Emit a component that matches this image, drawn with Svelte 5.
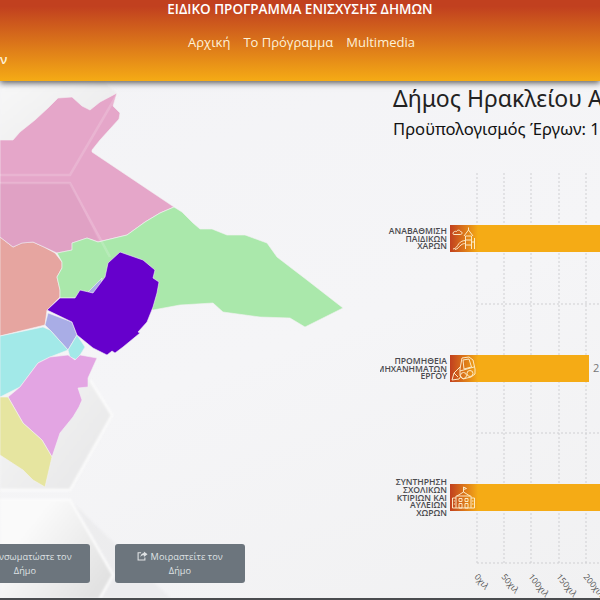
<script>
  const nav = ["Αρχική", "Το Πρόγραμμα", "Multimedia"];

  const regions = [
    { fill: "#e6a5a0", d: "M0 237L13 247L22 243L33 242L44 247L55 253L62 262L62 268L57 277L60 290L60 297L47 310L45 325L0 336Z" },
    { fill: "#e5a6c9", d: "M0 140L13 140L20 132L35 120L48 108L58 98L72 97L82 106L90 110L100 102L117 93L113 106L120 113L119 119L100 140L92 150L92 152L174 207L160 213L145 222L127 235L98 242L87 238L72 243L72 250L57 253L44 247L33 242L22 243L13 247L0 237Z" },
    { fill: "#aae8ab", d: "M174 207L182 212L193 223L200 229L212 229L227 235L245 235L267 243L277 257L290 267L307 280L343 308L305 327L290 318L260 317L223 312L213 303L180 305L153 310L130 300L95 300L75 298L60 298L60 290L57 277L62 268L62 262L57 253L72 250L72 243L87 238L98 242L127 235L145 222L160 213Z" },
    { fill: "#a9ade6", d: "M48 313L72 322L77 335L68 350L50 330L45 325Z" },
    { fill: "#a9ade6", d: "M88 292L102 278L100 295Z" },
    { fill: "#a2e9e8", d: "M0 336L43 327L50 330L68 350L50 357L38 363L20 387L0 397Z" },
    { fill: "#a2e9e8", d: "M77 335L85 347L77 360L70 357L68 350Z" },
    { fill: "#e3a5e3", d: "M68 355L75 360L80 355L97 358L88 378L88 387L78 388L82 400L79 407L73 417L60 433L52 457L42 440L23 423L8 397L20 387L38 363L50 357Z" },
    { fill: "#e6e5a0", d: "M0 397L8 397L23 423L42 440L52 457L45 487L33 480L23 470L0 455Z" },
    { fill: "#6600cc", d: "M47 310L60 298L75 298L80 290L93 293L105 277L108 263L120 252L143 260L155 270L153 278L159 282L157 293L153 307L147 322L138 332L140 333L123 347L115 353L112 351L107 355L93 348L77 335L72 322Z" }
  ];

  const hexLines = [
    "M105 81L118 93L70 175L0 175",
    "M0 183L70 183L110 257"
  ];

  const gridX = [97, 124, 151, 179, 206];
  const gridY = [13, 144, 273, 403];
  const ticks = ["0χιλ", "50χιλ", "100χιλ", "150χιλ", "200χιλ"];

  const bars = [
    { y: 65, w: 150, lines: ["ΑΝΑΒΑΘΜΙΣΗ", "ΠΑΙΔΙΚΩΝ", "ΧΑΡΩΝ"], kind: "play" },
    { y: 195, w: 139, lines: ["ΠΡΟΜΗΘΕΙΑ", "ΜΗΧΑΝΗΜΑΤΩΝ", "ΕΡΓΟΥ"], kind: "loader", value: "2" },
    { y: 324, w: 150, lines: ["ΣΥΝΤΗΡΗΣΗ", "ΣΧΟΛΙΚΩΝ", "ΚΤΙΡΙΩΝ ΚΑΙ", "ΑΥΛΕΙΩΝ", "ΧΩΡΩΝ"], kind: "school" }
  ];
</script>

<div class="page">
  <svg class="backdrop" width="600" height="600" viewBox="0 0 600 600" aria-hidden="true">
    <defs>
      <linearGradient id="hexshade" x1="0" y1="0" x2="1" y2="1">
        <stop offset="0" stop-color="#f8f8f8" />
        <stop offset="1" stop-color="#e6e6e7" />
      </linearGradient>
      <linearGradient id="hexshade2" x1="0" y1="0" x2="1" y2="0.7">
        <stop offset="0.3" stop-color="#fafafa" />
        <stop offset="1" stop-color="#e2e2e2" />
      </linearGradient>
    </defs>
    <path d="M0 88L85 84L105 81L118 93L70 175L0 175Z" fill="url(#hexshade)" />
    <path d="M40 340L90 380L112 415L70 490L0 490L0 400Z" fill="url(#hexshade)" />
    <path d="M0 500L70 500L113 575L100 598L0 598Z" fill="url(#hexshade2)" />
    <path d="M70 500L113 575L100 598L170 598Z" fill="#e8e8e9" opacity="0.6" />
    <path d="M90 380L112 415L70 490L0 490M0 500L70 500L113 575L100 598" fill="none" stroke="#fbfbfb" stroke-width="2.5" />
  </svg>

  <header class="top">
    <h1>ΕΙΔΙΚΟ ΠΡΟΓΡΑΜΜΑ ΕΝΙΣΧΥΣΗΣ ΔΗΜΩΝ</h1>
    <nav>
      {#each nav as item}
        <span>{item}</span>
      {/each}
    </nav>
    <span class="brand">ν</span>
  </header>

  <main>
    <section class="left">
      <svg class="map" width="380" height="600" viewBox="0 0 380 600" aria-label="Χάρτης">
        {#each regions as r}
          <path d={r.d} fill={r.fill} stroke="#f4f1f4" stroke-width="0.6" stroke-linejoin="round" />
        {/each}
        <path d="M0 183L70 183L98 240L87 238L72 243L72 250L57 253L33 242L13 247L0 237Z" fill="#b06a98" opacity="0.09" />
        {#each hexLines as d}
          <path {d} fill="none" stroke="#fff" stroke-opacity="0.16" stroke-width="2.5" />
        {/each}
      </svg>

      <div class="actions">
        <button>
          <svg class="btn-icon" viewBox="0 0 14 10" width="13" height="10"><path d="M4 1L1 5L4 9M10 1L13 5L10 9M8 1L6 9" fill="none" stroke="currentColor" stroke-width="1.3" /></svg>
          Ενσωματώστε τον Δήμο
        </button>
        <button>
          <svg class="btn-icon" viewBox="0 0 12 10" width="11" height="10"><path d="M4.5 1.5H1.2V9.3H8.6V6.5" fill="none" stroke="currentColor" stroke-width="1.2" /><path d="M7.5 0L11.5 3L7.5 6V4.3C5.8 4.3 4.4 4.8 3.6 6.6C3.8 4 5.4 2 7.5 1.8Z" fill="currentColor" /></svg>
          Μοιραστείτε τον Δήμο
        </button>
      </div>
    </section>

    <section class="right">
      <h2>Δήμος Ηρακλείου Αττικής</h2>
      <h3>Προϋπολογισμός Έργων: 1.250.000 €</h3>

      <svg class="chart" width="220" height="440" viewBox="0 0 220 440">
        <defs>
          <linearGradient id="iconfade" x1="0" y1="0" x2="1" y2="0">
            <stop offset="0" stop-color="#c1401f" />
            <stop offset="1" stop-color="#f5ab15" />
          </linearGradient>
        </defs>

        {#each gridX as x}
          <line x1={x} x2={x} y1="13" y2="403" class="grid" />
        {/each}
        {#each gridY.slice(1) as y}
          <line x1="97" x2="220" y1={y} y2={y} class="grid" />
        {/each}

        {#each bars as b}
          <rect x="70" y={b.y} width={b.w} height="27" fill="#f5ab15" />
          <rect x="70" y={b.y} width="28" height="27" fill="url(#iconfade)" />
          {#each b.lines as line, i}
            <text class="cat" x="67" y={b.y + 13.5 + (i - (b.lines.length - 1) / 2) * 7.6 + 3}>{line}</text>
          {/each}
          {#if b.value}
            <text class="val" x={b.w + 74} y={b.y + 17}>{b.value}</text>
          {/if}

          <g transform="translate(70 {b.y})" class="ico">
            {#if b.kind === "play"}
              <path d="M3 8.5C3 6.5 5.5 6 6.5 6.5C7.5 4.5 10 5 10.5 6.5C12.5 6.5 12.5 9.5 10.5 9.5H4C3.2 9.5 3 9 3 8.5Z" />
              <path d="M14 11L18.5 5L23 11M15.5 11H21.5V24M15.5 11V24M18.5 5V2.5M15.5 15H21.5M15.5 20H21.5M24.5 13V24M21.5 17H24.5" />
              <path d="M3 24C6 24 7 21 9 18.5C10.5 16.5 13 15.5 15.5 15.5M5 24.5C8 24 9 21.5 11 20C12.5 18.8 14 18.5 15.5 18.5" />
            {:else if b.kind === "loader"}
              <path d="M12 3L19 2L23 5L25 14V19L21 22L13 24L10 21L10 14Z" />
              <path d="M13 5L19 4L21.5 12L14 14ZM10 16L24 12" />
              <circle cx="20" cy="18.5" r="3" />
              <circle cx="13.5" cy="20.5" r="3" />
              <path d="M10 12L4 18L2 25L9 24L11 21M4 18L8 22" />
            {:else}
              <path d="M6 12H21V24H6ZM13.5 8L7 12M13.5 8L20 12M13.5 8V3M13.5 3L16.5 4.5L13.5 5.5" />
              <path d="M2.5 14H6M2.5 14V24H6M21 14H24.5V24H21" />
              <path d="M9 14.5H12V17.5H9ZM15 14.5H18V17.5H15ZM9 19.5H12V24H9ZM15 19.5H18V24H15ZM3.8 17H5M3.8 20H5M22 17H23.5M22 20H23.5" />
            {/if}
          </g>
        {/each}

        {#each gridX as x, i}
          <text class="tick" transform="translate({x - 3} 417) rotate(50)">{ticks[i]}</text>
        {/each}
      </svg>
    </section>
  </main>

  <footer></footer>
</div>

<style>
  :global(body) {
    margin: 0;
  }

  .page {
    position: relative;
    width: 600px;
    height: 600px;
    overflow: hidden;
    display: flex;
    flex-direction: column;
    background: linear-gradient(160deg, #f3f3f6 0%, #f5f5f7 55%, #f1f1f2 100%);
    font-family: "Open Sans", "Noto Sans", sans-serif;
  }

  .backdrop {
    position: absolute;
    left: 0;
    top: 0;
    filter: blur(1px);
  }

  .top {
    position: relative;
    z-index: 2;
    height: 81px;
    flex: none;
    background: linear-gradient(#c1401f 8%, #f5ab15 100%);
    box-shadow: 0 2px 6px rgba(40, 40, 40, 0.75);
    text-align: center;
  }

  h1 {
    margin: 0;
    padding-top: 1px;
    font-size: 13.5px;
    line-height: 16px;
    font-weight: 600;
    color: #fff;
  }

  nav {
    margin-top: 16px;
    padding-left: 3px;
    display: flex;
    justify-content: center;
    gap: 13px;
    font-size: 13px;
    line-height: 18px;
    color: #fdf2d8;
  }

  .brand {
    position: absolute;
    left: 0;
    top: 50px;
    font-size: 13px;
    font-weight: 600;
    color: #fff3d6;
  }

  main {
    position: relative;
    flex: 1;
    display: flex;
    min-height: 0;
  }

  .left {
    position: relative;
    width: 380px;
    flex: none;
    display: flex;
    flex-direction: column;
    justify-content: flex-end;
  }

  .map {
    position: absolute;
    left: 0;
    top: -81px;
  }

  .actions {
    position: relative;
    display: flex;
    gap: 25px;
    margin-left: -40px;
    padding-bottom: 15px;
  }

  button {
    width: 130px;
    height: 39px;
    padding: 0 14px;
    border: 0;
    border-radius: 3px;
    background: #6c757d;
    color: #dfe2e4;
    font-family: inherit;
    font-size: 9.2px;
    letter-spacing: 0.05px;
    line-height: 14px;
  }

  .btn-icon {
    vertical-align: -1px;
  }

  .right {
    position: relative;
    flex: 1;
    min-width: 0;
    overflow: hidden;
  }

  h2 {
    margin: 2px 0 0 13px;
    font-family: "Noto Sans", "Open Sans", sans-serif;
    font-size: 23px;
    line-height: 30px;
    font-weight: 400;
    color: #222;
    white-space: nowrap;
  }

  h3 {
    margin: 5px 0 0 13px;
    font-family: "Noto Sans", "Open Sans", sans-serif;
    font-size: 16.6px;
    line-height: 22px;
    font-weight: 400;
    color: #111;
    white-space: nowrap;
  }

  .chart {
    display: block;
    margin-top: 20px;
  }

  .grid {
    stroke: #cfcfd2;
    stroke-width: 1;
    stroke-dasharray: 2 2;
  }

  .cat {
    font-size: 8.6px;
    font-weight: 600;
    fill: #4a4a4e;
    text-anchor: end;
  }

  .val {
    font-size: 11px;
    fill: #777;
  }

  .tick {
    font-size: 8.5px;
    fill: #555;
  }

  .ico {
    fill: none;
    stroke: #fdeecb;
    stroke-width: 0.95;
    stroke-linejoin: round;
  }

  footer {
    position: relative;
    z-index: 2;
    height: 2px;
    flex: none;
    background: #4a4c4f;
  }
</style>
